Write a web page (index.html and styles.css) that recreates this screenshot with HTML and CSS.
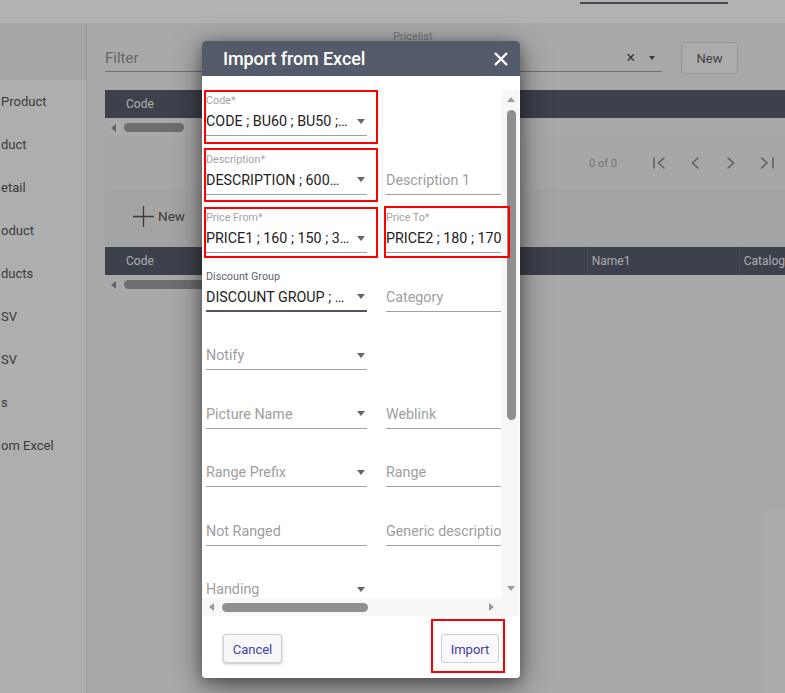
FILE: index.html
```html
<!DOCTYPE html>
<html>
<head>
<meta charset="utf-8">
<title>Import from Excel</title>
<link rel="stylesheet" href="styles.css">
</head>
<body>
<div class="app">
  <header class="topbar"><span class="tab-ind"></span></header>
  <div class="main">
    <aside class="side">
      <div class="side-head"></div>
      <nav class="side-list">
        <div class="side-item">Product</div>
        <div class="side-item">duct</div>
        <div class="side-item">etail</div>
        <div class="side-item">oduct</div>
        <div class="side-item">ducts</div>
        <div class="side-item">SV</div>
        <div class="side-item">SV</div>
        <div class="side-item">s</div>
        <div class="side-item">om Excel</div>
      </nav>
    </aside>
    <section class="content">
      <div class="toolbar">
        <div class="tfield tfield-filter">
          <span class="tlabel"></span>
          <div class="tinput"><span class="tph">Filter</span></div>
        </div>
        <div class="tfield tfield-price">
          <span class="tlabel">Pricelist</span>
          <div class="tinput"><span class="tval"></span><span class="tclear">×</span><span class="tcaret"></span></div>
        </div>
        <button class="tbtn">New</button>
      </div>
      <div class="ghead"><div class="gcol gcol-code">Code</div></div>
      <div class="gscroll"><span class="sarrow-l"></span><span class="gthumb"></span></div>
      <div class="pager">
        <span class="pcount">0 of 0</span>
        <span class="picon"><svg width="15" height="14" viewBox="0 0 15 14"><path d="M2 1.5V12.5M12.5 1.5L6.5 7L12.5 12.5" fill="none" stroke="#8c8c8c" stroke-width="1.6"/></svg></span>
        <span class="picon"><svg width="10" height="14" viewBox="0 0 10 14"><path d="M8.5 1.5L2.5 7L8.5 12.5" fill="none" stroke="#8c8c8c" stroke-width="1.6"/></svg></span>
        <span class="picon"><svg width="10" height="14" viewBox="0 0 10 14"><path d="M1.5 1.5L7.5 7L1.5 12.5" fill="none" stroke="#8c8c8c" stroke-width="1.6"/></svg></span>
        <span class="picon"><svg width="16" height="14" viewBox="0 0 16 14"><path d="M2 1.5L8 7L2 12.5M14 1.5V12.5" fill="none" stroke="#8c8c8c" stroke-width="1.6"/></svg></span>
      </div>
      <div class="newbar">
        <svg width="21" height="21" viewBox="0 0 21 21"><path d="M10.5 0V21M0 10.5H21" stroke="#555" stroke-width="1.3"/></svg>
        <span class="newtext">New</span>
      </div>
      <div class="ghead">
        <div class="gcol gcol-code">Code</div>
        <div class="gcol gcol-name">Name1</div>
        <div class="gcol gcol-cat">Catalog</div>
      </div>
      <div class="gscroll"><span class="sarrow-l"></span><span class="gthumb gthumb-wide"></span></div>
    </section>
  </div>
</div>

<div class="backdrop"></div>

<div class="dialog">
  <div class="dlg-head">
    <span class="dlg-title">Import from Excel</span>
    <svg class="dlg-close" width="14" height="14" viewBox="0 0 14 14"><path d="M1 1L13 13M13 1L1 13" stroke="#fff" stroke-width="2.4"/></svg>
  </div>
  <div class="dlg-scroll">
    <div class="dlg-view">
      <div class="dlg-grid">
        <div class="fld">
          <span class="fld-label">Code*</span>
          <div class="fld-input"><span class="fld-text">CODE ; BU60 ; BU50 ;…</span><span class="caret"></span></div>
        </div>
        <div class="fld-empty"></div>

        <div class="fld">
          <span class="fld-label">Description*</span>
          <div class="fld-input"><span class="fld-text">DESCRIPTION ; 600…</span><span class="caret"></span></div>
        </div>
        <div class="fld">
          <span class="fld-label"></span>
          <div class="fld-input"><span class="fld-text fld-ph">Description 1</span></div>
        </div>

        <div class="fld">
          <span class="fld-label">Price From*</span>
          <div class="fld-input"><span class="fld-text">PRICE1 ; 160 ; 150 ; 3…</span><span class="caret"></span></div>
        </div>
        <div class="fld">
          <span class="fld-label">Price To*</span>
          <div class="fld-input"><span class="fld-text">PRICE2 ; 180 ; 170 ; 350</span></div>
        </div>

        <div class="fld fld-focus">
          <span class="fld-label">Discount Group</span>
          <div class="fld-input"><span class="fld-text">DISCOUNT GROUP ; …</span><span class="caret"></span></div>
        </div>
        <div class="fld">
          <span class="fld-label"></span>
          <div class="fld-input"><span class="fld-text fld-ph">Category</span></div>
        </div>

        <div class="fld">
          <span class="fld-label"></span>
          <div class="fld-input"><span class="fld-text fld-ph">Notify</span><span class="caret"></span></div>
        </div>
        <div class="fld-empty"></div>

        <div class="fld">
          <span class="fld-label"></span>
          <div class="fld-input"><span class="fld-text fld-ph">Picture Name</span><span class="caret"></span></div>
        </div>
        <div class="fld">
          <span class="fld-label"></span>
          <div class="fld-input"><span class="fld-text fld-ph">Weblink</span></div>
        </div>

        <div class="fld">
          <span class="fld-label"></span>
          <div class="fld-input"><span class="fld-text fld-ph">Range Prefix</span><span class="caret"></span></div>
        </div>
        <div class="fld">
          <span class="fld-label"></span>
          <div class="fld-input"><span class="fld-text fld-ph">Range</span></div>
        </div>

        <div class="fld">
          <span class="fld-label"></span>
          <div class="fld-input"><span class="fld-text fld-ph">Not Ranged</span></div>
        </div>
        <div class="fld">
          <span class="fld-label"></span>
          <div class="fld-input"><span class="fld-text fld-ph">Generic description</span></div>
        </div>

        <div class="fld">
          <span class="fld-label"></span>
          <div class="fld-input"><span class="fld-text fld-ph">Handing</span><span class="caret"></span></div>
        </div>
        <div class="fld-empty"></div>
      </div>
    </div>
    <div class="vbar">
      <span class="sarrow-up"></span>
      <span class="vthumb"></span>
      <span class="sarrow-down"></span>
    </div>
    <div class="hbar">
      <span class="sarrow-l"></span>
      <span class="hthumb"></span>
      <span class="sarrow-r"></span>
    </div>
    <div class="corner"></div>
  </div>
  <div class="dlg-foot">
    <button class="btn btn-cancel">Cancel</button>
    <button class="btn btn-import">Import</button>
  </div>

  <span class="mark mark-code"></span>
  <span class="mark mark-desc"></span>
  <span class="mark mark-pfrom"></span>
  <span class="mark mark-pto"></span>
  <span class="mark mark-import"></span>
</div>
</body>
</html>
```

FILE: styles.css
```css
* { box-sizing: border-box; margin: 0; padding: 0; }

html, body {
  width: 785px;
  height: 693px;
  overflow: hidden;
}

body {
  position: relative;
  font-family: Roboto, "Liberation Sans", sans-serif;
  background: #f3f3f3;
  color: #333;
}

/* ---------- background application ---------- */
.app {
  display: flex;
  flex-direction: column;
  height: 693px;
}

.topbar {
  height: 23px;
  background: #ffffff;
  display: flex;
  padding-left: 580px;
  flex-shrink: 0;
}

.tab-ind {
  width: 148px;
  height: 2px;
  margin-top: 2px;
  background: #636a76;
}

.main {
  flex: 1;
  display: flex;
  min-height: 0;
}

.side {
  width: 87px;
  flex-shrink: 0;
  background: #fafafa;
  border-right: 1px solid #dadada;
  overflow: hidden;
}

.side-head {
  height: 57px;
  background: #efefef;
}

.side-item {
  height: 43px;
  display: flex;
  align-items: center;
  font-size: 13px;
  color: #555;
  white-space: nowrap;
  padding-left: 1px;
}

.content {
  flex: 1;
  min-width: 0;
  background: #f3f3f3;
  padding-left: 18px;
  overflow: hidden;
}

.toolbar {
  height: 67px;
  display: flex;
  align-items: flex-start;
  padding-top: 7px;
}

.tfield {
  height: 42px;
  display: flex;
  flex-direction: column;
  border-bottom: 1px solid #a3a3a3;
}

.tfield-filter { width: 275px; }
.tfield-price { width: 269px; margin-left: 13px; }

.tlabel {
  height: 14px;
  font-size: 11px;
  line-height: 14px;
  color: #a8a8a8;
}

.tinput {
  flex: 1;
  display: flex;
  align-items: center;
  font-size: 15px;
}

.tph { color: #949494; }
.tval { flex: 1; }

.tclear {
  font-size: 16px;
  color: #555;
  margin-right: 14px;
}

.tcaret {
  width: 0;
  height: 0;
  border-left: 3.5px solid transparent;
  border-right: 3.5px solid transparent;
  border-top: 4px solid #555;
  margin-right: 7px;
}

.tbtn {
  margin-left: 19px;
  margin-top: 12px;
  width: 57px;
  height: 32px;
  border: 1px solid #d8d8d8;
  border-radius: 4px;
  background: #f6f6f6;
  font-family: Roboto, "Liberation Sans", sans-serif;
  font-size: 13px;
  color: #616161;
}

.ghead {
  height: 28px;
  display: flex;
  background: #585e6c;
  color: #f4f4f4;
  font-size: 12px;
  line-height: 28px;
}

.gcol { white-space: nowrap; }
.gcol-code { width: 485px; padding-left: 21px; }
.gcol-name { width: 153px; padding-left: 4px; border-left: 1px solid #646a78; }
.gcol-cat { flex: 1; padding-left: 4px; border-left: 1px solid #646a78; }

.gscroll {
  height: 19px;
  display: flex;
  align-items: center;
  padding-left: 6px;
}

.sarrow-l {
  width: 0;
  height: 0;
  border-top: 4.5px solid transparent;
  border-bottom: 4.5px solid transparent;
  border-right: 5px solid #8f8f8f;
}

.sarrow-r {
  width: 0;
  height: 0;
  border-top: 4.5px solid transparent;
  border-bottom: 4.5px solid transparent;
  border-left: 5px solid #8f8f8f;
}

.gthumb {
  margin-left: 8px;
  width: 60px;
  height: 9px;
  border-radius: 5px;
  background: #9e9e9e;
}

.gthumb-wide { width: 200px; }

.pager {
  height: 52px;
  display: flex;
  align-items: center;
  padding-left: 484px;
  background: #f0f0f0;
}

.pcount {
  font-size: 11px;
  color: #a6a6a6;
  width: 56px;
  white-space: nowrap;
}

.picon {
  width: 36px;
  flex-shrink: 0;
  display: flex;
  justify-content: center;
  align-items: center;
}

.newbar {
  height: 58px;
  display: flex;
  align-items: center;
  padding-left: 28px;
  padding-bottom: 4px;
  background: #ebebeb;
}

.newtext {
  margin-left: 4px;
  font-size: 13.5px;
  color: #565656;
}

.backdrop {
  position: absolute;
  inset: 0;
  background: rgba(0, 0, 0, 0.3);
}

/* ---------- dialog ---------- */
.dialog {
  position: absolute;
  left: 202px;
  top: 41px;
  width: 318px;
  height: 637px;
  background: #ffffff;
  border-radius: 4px;
  box-shadow: 0 8px 30px rgba(0, 0, 0, 0.5), 0 2px 12px rgba(0, 0, 0, 0.25);
  display: flex;
  flex-direction: column;
}

.dlg-head {
  height: 35px;
  flex-shrink: 0;
  background: #535a6a;
  border-radius: 4px 4px 0 0;
  display: flex;
  align-items: center;
  justify-content: space-between;
  padding: 0 12px 0 21px;
}

.dlg-title {
  color: #ffffff;
  font-size: 18px;
  font-weight: 500;
  letter-spacing: -0.1px;
}

.dlg-scroll {
  margin-top: 14px;
  display: grid;
  grid-template-columns: 299px 18px;
  grid-template-rows: 508px 18px;
}

.dlg-view {
  overflow: hidden;
}

.dlg-grid {
  display: grid;
  grid-template-columns: 161px 115px;
  column-gap: 19px;
  row-gap: 16.5px;
  padding: 4px 0 0 4px;
}

.fld {
  height: 42px;
  min-width: 0;
  display: flex;
  flex-direction: column;
  padding-bottom: 3px;
  border-bottom: 1px solid #a0a0a0;
}

.fld-empty { height: 42px; }

.fld-label {
  height: 14px;
  font-size: 10.75px;
  line-height: 14px;
  color: #a3a3a3;
  white-space: nowrap;
}

.fld-input {
  height: 22px;
  margin-top: 2px;
  display: flex;
  align-items: center;
  font-size: 14.3px;
  color: #222222;
  white-space: nowrap;
  overflow: hidden;
}

.fld-text {
  flex: 1;
  min-width: 0;
  overflow: hidden;
}

.fld-ph { color: #9e9e9e; }

.fld-focus {
  border-bottom: 2px solid #4f5567;
  padding-bottom: 2px;
}

.fld-focus .fld-label { color: #5e6476; }

.caret {
  flex-shrink: 0;
  width: 0;
  height: 0;
  border-left: 4.5px solid transparent;
  border-right: 4.5px solid transparent;
  border-top: 5px solid #666;
  margin: 0 2px 0 4px;
}

.vbar {
  background: #f7f7f7;
  display: flex;
  flex-direction: column;
  align-items: center;
  padding-top: 7px;
  padding-bottom: 7px;
  padding-left: 2px;
}

.sarrow-up {
  width: 0;
  height: 0;
  border-left: 4.5px solid transparent;
  border-right: 4.5px solid transparent;
  border-bottom: 5px solid #9a9a9a;
}

.sarrow-down {
  margin-top: auto;
  width: 0;
  height: 0;
  border-left: 4.5px solid transparent;
  border-right: 4.5px solid transparent;
  border-top: 5px solid #9a9a9a;
}

.vthumb {
  margin-top: 8px;
  width: 9px;
  height: 310px;
  border-radius: 5px;
  background: #8f8f8f;
}

.hbar {
  background: #f7f7f7;
  display: flex;
  align-items: center;
  padding: 0 7px;
}

.hbar .sarrow-l,
.hbar .sarrow-r { border-left-color: #9a9a9a; border-right-color: #9a9a9a; }
.hbar .sarrow-l { border-left: 0; }
.hbar .sarrow-r { margin-left: auto; border-right: 0; }

.hthumb {
  margin-left: 8px;
  width: 146px;
  height: 9px;
  border-radius: 5px;
  background: #8f8f8f;
}

.corner { background: #f7f7f7; }

.dlg-foot {
  flex: 1;
  display: flex;
  justify-content: space-between;
  align-items: flex-start;
  padding: 18px 21px 0 21px;
}

.btn {
  height: 29px;
  padding-top: 2px;
  font-family: Roboto, "Liberation Sans", sans-serif;
  font-size: 13px;
  color: #3f3ca6;
  background: #f8f8fa;
  border: 1px solid #cdcdd2;
  border-radius: 3px;
  box-shadow: 0 1px 3px rgba(0, 0, 0, 0.25);
}

.btn-cancel { width: 59px; }
.btn-import { width: 58px; box-shadow: none; }

/* red annotation boxes drawn over the dialog */
.mark {
  position: absolute;
  border: 2px solid #ff0000;
}

.mark-code   { left: 2px;   top: 49px;  width: 174px; height: 54px; }
.mark-desc   { left: 2px;   top: 107px; width: 174px; height: 54px; }
.mark-pfrom  { left: 2px;   top: 166px; width: 174px; height: 51px; }
.mark-pto    { left: 182px; top: 165px; width: 126px; height: 52px; }
.mark-import { left: 229px; top: 578px; width: 74px;  height: 54px; }
```
